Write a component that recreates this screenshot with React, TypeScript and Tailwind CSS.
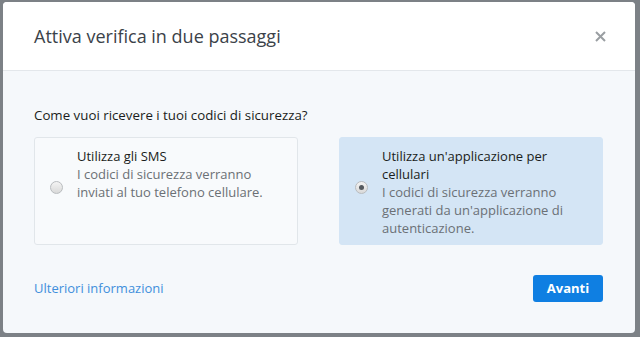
import React, { useState } from 'react';

interface OptionProps {
  title: React.ReactNode;
  description: React.ReactNode;
  selected: boolean;
  onSelect: () => void;
}

const Radio: React.FC<{ checked: boolean }> = ({ checked }) => (
  <span className="mb-[7px] flex h-[13px] w-[13px] shrink-0 items-center justify-center rounded-full border border-[#b9bcbf] bg-gradient-to-b from-[#f4f4f4] to-[#d9d9d9]">
    {checked && <span className="h-[5px] w-[5px] rounded-full bg-[#555a5f]"></span>}
  </span>
);

const Option: React.FC<OptionProps> = ({ title, description, selected, onSelect }) => (
  <button
    onClick={onSelect}
    className={
      selected
        ? 'flex h-[108px] items-center gap-[14px] rounded-[3px] border border-[#d4e5f5] bg-[#d4e5f5] pl-[15px] pr-[10px] text-left'
        : 'flex h-[108px] items-center gap-[14px] rounded-[3px] border border-[#e1e6ea] bg-[#f8fafc] pl-[15px] pr-[10px] text-left'
    }
  >
    <Radio checked={selected} />
    <div className="self-start pt-[9px] text-[13px] leading-[18px]">
      <div className="text-[#1a1d20]">{title}</div>
      <div className="text-[#6b7075]">{description}</div>
    </div>
  </button>
);

const App: React.FC = () => {
  const [method, setMethod] = useState<'sms' | 'app'>('app');

  return (
    <div className="flex h-[337px] w-[640px] bg-[#7c8186] pb-[4px] pl-[3px] pr-[5px] pt-[2px] font-['Open_Sans',sans-serif]">
      <div className="flex flex-1 flex-col overflow-hidden rounded-[4px] bg-[#f5f8fb]">
        <div className="flex h-[69px] shrink-0 items-center justify-between border-b border-[#e3e7eb] bg-white pl-[31px] pr-[29px]">
          <h1 className="text-[18px] text-[#3b4249]">Attiva verifica in due passaggi</h1>
          <button className="text-[#9a9ea2]">
            <svg width="11" height="11" viewBox="0 0 11 11">
              <path d="M1 1 L10 10 M10 1 L1 10" stroke="currentColor" strokeWidth="2" />
            </svg>
          </button>
        </div>

        <div className="flex flex-1 flex-col pl-[31px] pr-[32px] pt-[35px]">
          <p className="text-[13.3px] leading-[18px] text-[#1a1d20]">Come vuoi ricevere i tuoi codici di sicurezza?</p>

          <div className="mt-[13px] grid grid-cols-2 gap-[41px]">
            <Option
              title="Utilizza gli SMS"
              description={<>I codici di sicurezza verranno<br />inviati al tuo telefono cellulare.</>}
              selected={method === 'sms'}
              onSelect={() => setMethod('sms')}
            />
            <Option
              title={<>Utilizza un'applicazione per<br />cellulari</>}
              description={<>I codici di sicurezza verranno<br />generati da un'applicazione di<br />autenticazione.</>}
              selected={method === 'app'}
              onSelect={() => setMethod('app')}
            />
          </div>

          <div className="mt-[30px] flex items-center justify-between">
            <a href="#" className="text-[13px] text-[#3f8fdc]">Ulteriori informazioni</a>
            <button className="h-[27px] w-[70px] rounded-[3px] bg-[#0f7fe2] text-[13px] font-bold text-white">
              Avanti
            </button>
          </div>
        </div>
      </div>
    </div>
  );
};

export default App;
